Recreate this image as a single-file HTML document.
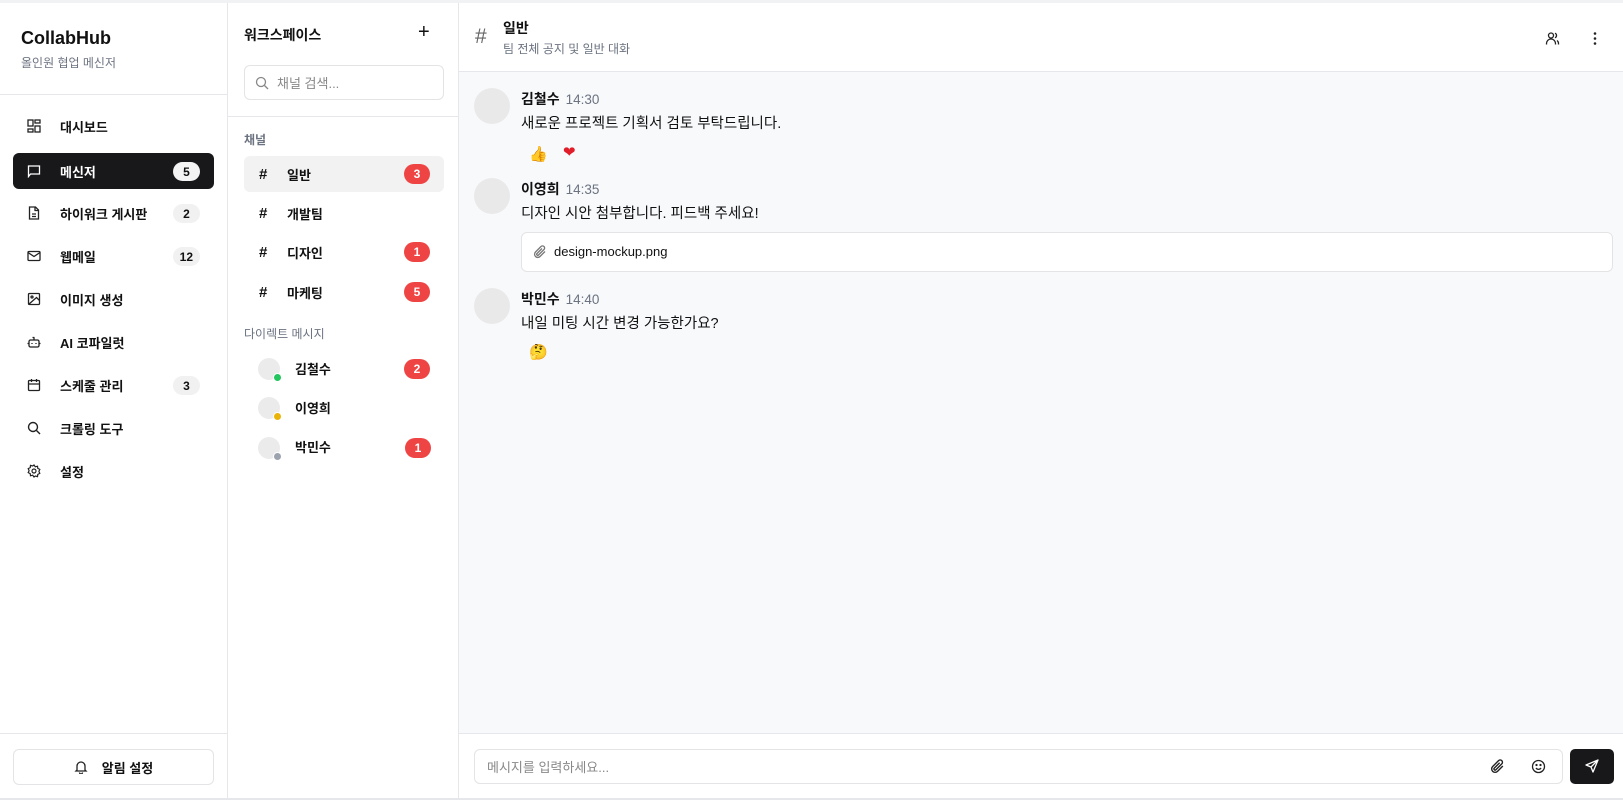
<!DOCTYPE html>
<html><head><meta charset="utf-8"><style>
*{box-sizing:border-box;margin:0;padding:0}
body{width:1623px;height:800px;overflow:hidden;background:#fff;font-family:"Liberation Sans","Noto Sans CJK KR",sans-serif;color:#111;position:relative}
.abs{position:absolute}
.topband{left:0;top:0;width:1623px;height:3px;background:#f1f2f4}
.side{left:0;top:3px;width:228px;height:796px;border-right:1px solid #e6e7ea}
.panel{left:228px;top:3px;width:231px;height:796px;border-right:1px solid #e6e7ea}
.main{left:459px;top:3px;width:1164px;height:796px;background:#f8f9fb}
.bottomline{left:0;top:798px;width:1623px;height:2px;background:#e6e7ea}
.nav{position:absolute;left:13px;width:201px;height:36px;border-radius:6px;font-size:13px;font-weight:bold;display:flex;align-items:center;padding-left:47px}
.nav svg{position:absolute;left:14px;top:11px}
.nav .b{position:absolute;right:14px;top:9px;height:19px;min-width:27px;padding:0 7px;border-radius:10px;background:#f1f1f2;font-size:12px;display:flex;align-items:center;justify-content:center;font-weight:bold}
.ch{position:absolute;left:244px;width:200px;height:36px;border-radius:6px;font-size:13px;font-weight:bold;display:flex;align-items:center;padding-left:43px}
.ch .h{position:absolute;left:15px;font-size:15px;font-weight:bold}
.red{position:absolute;right:14px;height:20px;min-width:26px;padding:0 8px;border-radius:10px;background:#ef4444;color:#fff;font-size:12px;font-weight:bold;display:flex;align-items:center;justify-content:center}
.av{position:absolute;width:22px;height:22px;border-radius:50%;background:#ebebeb}
.dot{position:absolute;width:9px;height:9px;border-radius:50%;border:1px solid #fff}
.mav{position:absolute;left:474px;width:36px;height:36px;border-radius:50%;background:#e9e9ea}
.nm{position:absolute;left:521px;font-size:14px;font-weight:bold}
.nm span{font-weight:normal;color:#6b7280;font-size:13.5px;margin-left:6px}
.tx{position:absolute;left:521px;font-size:14.5px;color:#111}
</style></head><body>
<div class="abs topband"></div>
<div class="abs main"></div>
<div class="abs side"></div>
<div class="abs panel"></div>

<!-- sidebar -->
<div class="abs" style="left:21px;top:28px;font-size:18px;font-weight:bold">CollabHub</div>
<div class="abs" style="left:21px;top:54px;font-size:12px;color:#6b7280">올인원 협업 메신저</div>
<div class="abs" style="left:0;top:94px;width:228px;height:1px;background:#e6e7ea"></div>

<div class="nav" style="top:108px"><svg width="14" height="14" viewBox="0 0 14 14" fill="none" stroke="#222" stroke-width="1.3"><rect x="1" y="1" width="5" height="6"/><rect x="8" y="1" width="5" height="3"/><rect x="8" y="7" width="5" height="6"/><rect x="1" y="10" width="5" height="3"/></svg>대시보드</div>
<div class="nav" style="top:153px;background:#18181b;color:#fff"><svg width="14" height="14" viewBox="0 0 14 14" fill="none" stroke="#fff" stroke-width="1.3"><path d="M1.5 2h11v8h-9l-2 2.5z"/></svg>메신저<span class="b" style="background:#f4f4f5;color:#111">5</span></div>
<div class="nav" style="top:195px"><svg width="14" height="14" viewBox="0 0 14 14" fill="none" stroke="#222" stroke-width="1.3"><path d="M2.5 1h6l3 3v9h-9z M8 1v3.5h3.5 M5 8h4 M5 10.5h4"/></svg>하이워크 게시판<span class="b">2</span></div>
<div class="nav" style="top:238px"><svg width="14" height="14" viewBox="0 0 14 14" fill="none" stroke="#222" stroke-width="1.3"><rect x="1" y="2.5" width="12" height="9" rx="1"/><path d="M1 3.5l6 4 6-4"/></svg>웹메일<span class="b">12</span></div>
<div class="nav" style="top:281px"><svg width="14" height="14" viewBox="0 0 14 14" fill="none" stroke="#222" stroke-width="1.3"><rect x="1.5" y="1.5" width="11" height="11" rx="1"/><circle cx="5" cy="5" r="1"/><path d="M12.5 8.5l-3-3-8 7"/></svg>이미지 생성</div>
<div class="nav" style="top:324px"><svg width="14" height="14" viewBox="0 0 14 14" fill="none" stroke="#222" stroke-width="1.3"><rect x="2" y="5" width="10" height="7" rx="1.5"/><path d="M7 5V2.5 M5.5 2.5h2 M5 8v1 M9 8v1 M0.5 8.5h1.5 M12 8.5h1.5"/></svg>AI 코파일럿</div>
<div class="nav" style="top:367px"><svg width="14" height="14" viewBox="0 0 14 14" fill="none" stroke="#222" stroke-width="1.3"><rect x="1.5" y="2.5" width="11" height="10" rx="1"/><path d="M4.5 1v3 M9.5 1v3 M1.5 6h11"/></svg>스케줄 관리<span class="b">3</span></div>
<div class="nav" style="top:410px"><svg width="14" height="14" viewBox="0 0 14 14" fill="none" stroke="#222" stroke-width="1.4"><circle cx="6" cy="6" r="4.5"/><path d="M9.5 9.5l3.5 3.5"/></svg>크롤링 도구</div>
<div class="nav" style="top:453px"><svg width="14" height="14" viewBox="0 0 14 14" fill="none" stroke="#222" stroke-width="1.2"><circle cx="7" cy="7" r="2"/><path d="M7 1l1.3 1.8 2.2-.6.3 2.2 2 1-.9 2 .9 2-2 1-.3 2.2-2.2-.6L7 13l-1.3-1.8-2.2.6-.3-2.2-2-1 .9-2-.9-2 2-1 .3-2.2 2.2.6z"/></svg>설정</div>

<div class="abs" style="left:0;top:733px;width:228px;height:1px;background:#e6e7ea"></div>
<div class="abs" style="left:13px;top:749px;width:201px;height:36px;border:1px solid #e4e4e7;border-radius:6px;display:flex;align-items:center;justify-content:center;font-size:13px;font-weight:bold"><svg width="14" height="14" viewBox="0 0 14 14" fill="none" stroke="#222" stroke-width="1.3" style="margin-right:14px"><path d="M3 10V6a4 4 0 0 1 8 0v4l1 1H2z M5.5 12.5a1.5 1.5 0 0 0 3 0"/></svg>알림 설정</div>

<!-- panel -->
<div class="abs" style="left:244px;top:25px;font-size:14px;font-weight:bold">워크스페이스</div>
<div class="abs" style="left:418px;top:21px;font-size:20px;font-weight:300">+</div>
<div class="abs" style="left:244px;top:65px;width:200px;height:35px;border:1px solid #e4e4e7;border-radius:6px"></div>
<svg class="abs" style="left:255px;top:76px" width="14" height="14" viewBox="0 0 14 14" fill="none" stroke="#888" stroke-width="1.3"><circle cx="6" cy="6" r="4.5"/><path d="M9.5 9.5l3.5 3.5"/></svg>
<div class="abs" style="left:277px;top:73px;font-size:13px;color:#888">채널 검색...</div>
<div class="abs" style="left:228px;top:116px;width:231px;height:1px;background:#e6e7ea"></div>
<div class="abs" style="left:244px;top:131px;font-size:12px;color:#6b7280;font-weight:bold">채널</div>
<div class="ch" style="top:156px;background:#f2f2f3"><span class="h">#</span>일반<span class="red">3</span></div>
<div class="ch" style="top:195px"><span class="h">#</span>개발팀</div>
<div class="ch" style="top:234px"><span class="h">#</span>디자인<span class="red">1</span></div>
<div class="ch" style="top:274px"><span class="h">#</span>마케팅<span class="red">5</span></div>
<div class="abs" style="left:244px;top:325px;font-size:12px;color:#6b7280">다이렉트 메시지</div>
<div class="av" style="left:258px;top:358px"></div><div class="dot" style="left:273px;top:373px;background:#22c55e"></div>
<div class="abs" style="left:295px;top:359px;font-size:13px;font-weight:bold">김철수</div><div class="red" style="left:404px;top:359px;right:auto">2</div>
<div class="av" style="left:258px;top:397px"></div><div class="dot" style="left:273px;top:412px;background:#eab308"></div>
<div class="abs" style="left:295px;top:398px;font-size:13px;font-weight:bold">이영희</div>
<div class="av" style="left:258px;top:437px"></div><div class="dot" style="left:273px;top:452px;background:#9ca3af"></div>
<div class="abs" style="left:295px;top:437px;font-size:13px;font-weight:bold">박민수</div><div class="red" style="left:405px;top:438px;right:auto">1</div>

<!-- main header -->
<div class="abs" style="left:459px;top:3px;width:1164px;height:69px;background:#fff;border-bottom:1px solid #e6e7ea"></div>
<div class="abs" style="left:475px;top:25px;font-size:21px;color:#666">#</div>
<div class="abs" style="left:503px;top:18px;font-size:14px;font-weight:bold">일반</div>
<div class="abs" style="left:503px;top:40px;font-size:12px;color:#6b7280">팀 전체 공지 및 일반 대화</div>
<svg class="abs" style="left:1545px;top:31px" width="15" height="15" viewBox="0 0 15 15" fill="none" stroke="#222" stroke-width="1.3"><circle cx="6" cy="4.5" r="2.5"/><path d="M1.5 13.5v-1a4 4 0 0 1 9 0v1 M10 2.2a2.5 2.5 0 0 1 0 4.6 M12 9.5a3.5 3.5 0 0 1 1.5 3v1"/></svg>
<svg class="abs" style="left:1592px;top:31px" width="6" height="15" viewBox="0 0 6 15" fill="#222"><circle cx="3" cy="2.5" r="1.3"/><circle cx="3" cy="7.5" r="1.3"/><circle cx="3" cy="12.5" r="1.3"/></svg>

<!-- messages -->
<div class="mav" style="top:88px"></div>
<div class="nm" style="top:89px">김철수<span>14:30</span></div>
<div class="tx" style="top:112px">새로운 프로젝트 기획서 검토 부탁드립니다.</div>
<div class="abs" style="left:529px;top:145px;font-size:15px">👍</div>
<div class="abs" style="left:563px;top:143px;font-size:15px;color:#e11d2a">❤</div>

<div class="mav" style="top:178px"></div>
<div class="nm" style="top:179px">이영희<span>14:35</span></div>
<div class="tx" style="top:202px">디자인 시안 첨부합니다. 피드백 주세요!</div>
<div class="abs" style="left:521px;top:232px;width:1092px;height:40px;border:1px solid #e4e4e7;border-radius:6px;background:#fff"></div>
<svg class="abs" style="left:533px;top:245px" width="14" height="14" viewBox="0 0 14 14" fill="none" stroke="#777" stroke-width="1.3"><path d="M12 6.5L7 11.5a3 3 0 0 1-4.5-4.5l5.5-5.5a2 2 0 0 1 3 3L5.5 10a1 1 0 0 1-1.5-1.5L9 3.5"/></svg>
<div class="abs" style="left:554px;top:244px;font-size:13px">design-mockup.png</div>

<div class="mav" style="top:288px"></div>
<div class="nm" style="top:289px">박민수<span>14:40</span></div>
<div class="tx" style="top:312px">내일 미팅 시간 변경 가능한가요?</div>
<div class="abs" style="left:529px;top:343px;font-size:15px">🤔</div>

<!-- input -->
<div class="abs" style="left:459px;top:733px;width:1164px;height:66px;background:#fff;border-top:1px solid #e6e7ea"></div>
<div class="abs" style="left:474px;top:749px;width:1089px;height:35px;border:1px solid #e4e4e7;border-radius:6px;background:#fff"></div>
<div class="abs" style="left:487px;top:757px;font-size:13px;color:#888">메시지를 입력하세요...</div>
<svg class="abs" style="left:1490px;top:759px" width="15" height="15" viewBox="0 0 14 14" fill="none" stroke="#222" stroke-width="1.3"><path d="M12 6.5L7 11.5a3 3 0 0 1-4.5-4.5l5.5-5.5a2 2 0 0 1 3 3L5.5 10a1 1 0 0 1-1.5-1.5L9 3.5"/></svg>
<svg class="abs" style="left:1531px;top:759px" width="15" height="15" viewBox="0 0 15 15" fill="none" stroke="#222" stroke-width="1.3"><circle cx="7.5" cy="7.5" r="6"/><path d="M5 9a3 3 0 0 0 5 0"/><circle cx="5.5" cy="6" r=".5" fill="#222"/><circle cx="9.5" cy="6" r=".5" fill="#222"/></svg>
<div class="abs" style="left:1570px;top:749px;width:44px;height:35px;border-radius:5px;background:#18181b"></div>
<svg class="abs" style="left:1585px;top:759px" width="14" height="14" viewBox="0 0 14 14" fill="none" stroke="#fff" stroke-width="1.3" stroke-linejoin="round"><path d="M13 1L1 6l5 2 2 5z M13 1L6 8"/></svg>
<div class="abs bottomline"></div>
</body></html>
